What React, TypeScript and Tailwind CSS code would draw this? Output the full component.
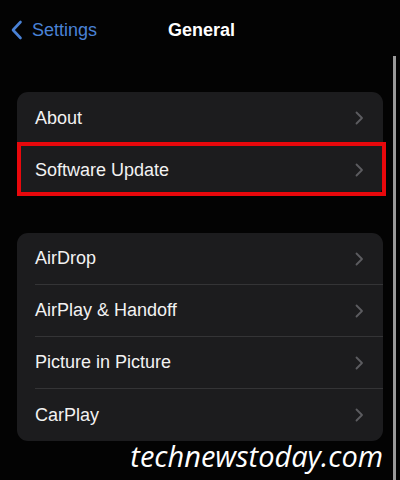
const Chevron = () => (
  <svg width="9" height="14" viewBox="0 0 9 14" fill="none">
    <path d="M1.5 1.5L7 7L1.5 12.5" stroke="#5c5c60" strokeWidth="1.8" strokeLinecap="round" strokeLinejoin="round" />
  </svg>
);

const Row = ({ label, last }: { label: string; last?: boolean }) => (
  <div className="flex h-[52px] items-center pl-[18px]">
    <div className={`flex h-full flex-1 items-center pr-[19px] ${last ? "" : "border-b border-[#343436]"}`}>
      <span className="flex-1 text-[18px] text-[#f2f2f2]">{label}</span>
      <Chevron />
    </div>
  </div>
);

const App = () => {
  return (
    <div
      className="relative h-[480px] w-[400px] overflow-hidden bg-[#030303]"
      style={{ fontFamily: '"Liberation Sans", Arial, sans-serif' }}
    >
      <div className="flex h-[60px] items-center px-[10px]">
        <div className="flex w-[130px] items-center gap-[9px] text-[#4a82d6]">
          <svg width="13" height="20" viewBox="0 0 13 20" fill="none">
            <path d="M10.5 2L3 10L10.5 18" stroke="#4a82d6" strokeWidth="2.6" strokeLinecap="round" strokeLinejoin="round" />
          </svg>
          <span className="text-[18px]">Settings</span>
        </div>
        <span className="ml-[28px] text-[18px] font-bold text-white">General</span>
      </div>

      <div className="ml-[17px] mt-[32px] w-[366px] rounded-[11px] bg-[#1c1c1e]">
        <Row label="About" last />
        <div className="relative">
          <Row label="Software Update" last />
          <div className="absolute -top-[2px] bottom-0 left-0 -right-[3px] border-4 border-[#e8080c]" />
        </div>
      </div>

      <div className="ml-[17px] mt-[37px] w-[366px] rounded-[11px] bg-[#1c1c1e]">
        <Row label="AirDrop" />
        <Row label="AirPlay & Handoff" />
        <Row label="Picture in Picture" />
        <Row label="CarPlay" last />
      </div>

      <div
        className="pr-[17px] text-right text-[29px] italic leading-[30px] text-white"
        style={{ fontFamily: '"Open Sans", sans-serif' }}
      >
        technewstoday.com
      </div>

      <div className="absolute bottom-0 left-[393px] top-[56px] w-[2.5px] bg-[#9a9a9a]" />
    </div>
  );
};

export default App;
